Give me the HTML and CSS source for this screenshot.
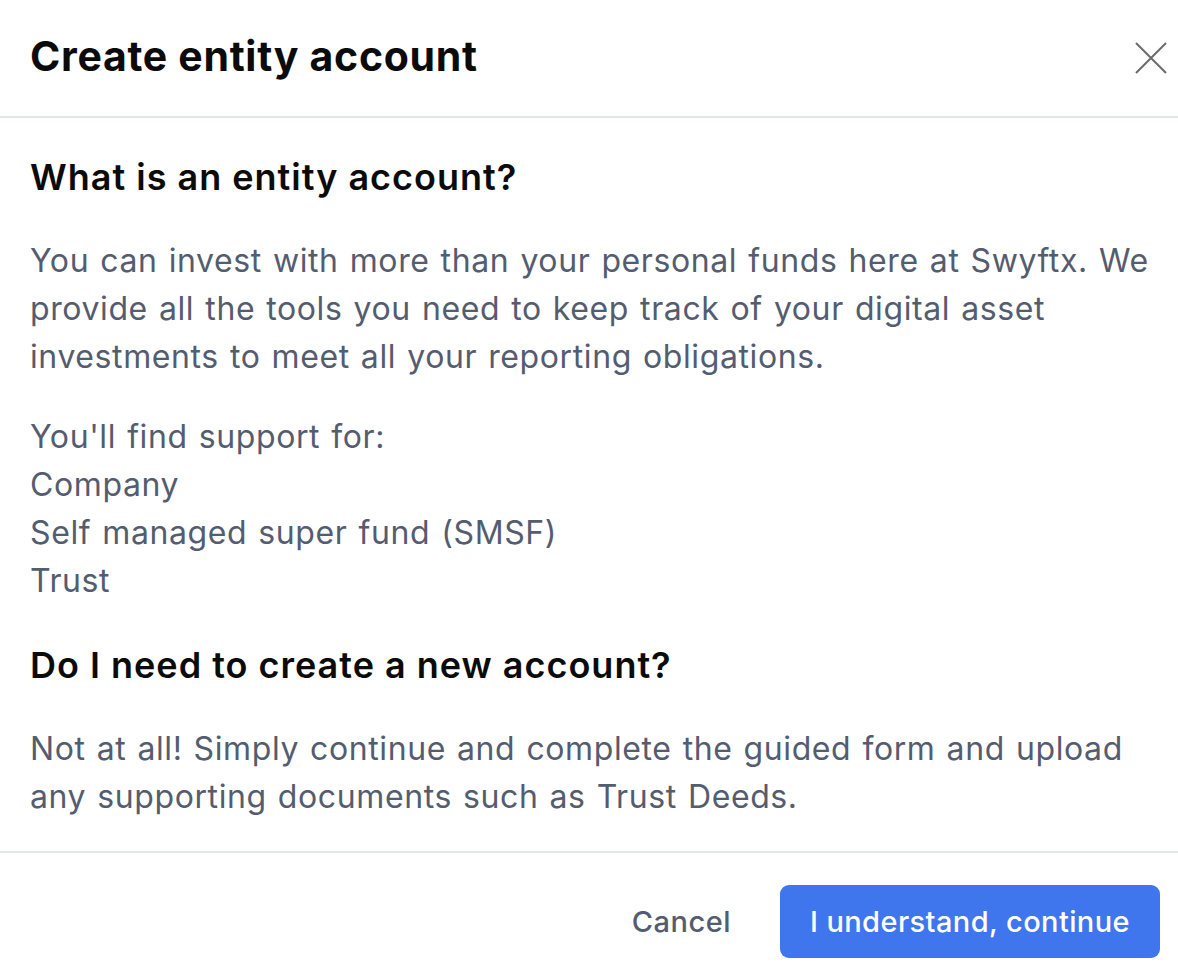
FILE: index.html
```html
<!DOCTYPE html>
<html lang="en">
<head>
<meta charset="utf-8">
<title>Create entity account</title>
<link rel="stylesheet" href="styles.css">
</head>
<body>
<div class="modal">
  <header class="modal-header">
    <h1 class="modal-title">Create entity account</h1>
    <button class="close-btn" aria-label="Close">
      <svg width="34" height="34" viewBox="0 0 34 34"><path d="M2 2 L32 32 M32 2 L2 32" stroke="#6b6b6b" stroke-width="2" fill="none"/></svg>
    </button>
  </header>
  <main class="modal-body">
    <h2 class="section-title">What is an entity account?</h2>
    <p class="text">You can invest with more than your personal funds here at Swyftx. We provide all the tools you need to keep track of your digital asset investments to meet all your reporting obligations.</p>
    <p class="text">You'll find support for:<br>Company<br>Self managed super fund (SMSF)<br>Trust</p>
    <h2 class="section-title second">Do I need to create a new account?</h2>
    <p class="text">Not at all! Simply continue and complete the guided form and upload any supporting documents such as Trust Deeds.</p>
  </main>
  <footer class="modal-footer">
    <button class="btn-cancel">Cancel</button>
    <button class="btn-primary">I understand, continue</button>
  </footer>
</div>
</body>
</html>
```
FILE: styles.css
```css
html, body {
  margin: 0;
  padding: 0;
  background: #ffffff;
}
body {
  font-family: Inter, "Open Sans", sans-serif;
  width: 1178px;
  height: 977px;
  overflow: hidden;
}
.modal {
  display: flex;
  flex-direction: column;
}
.modal-header {
  height: 116px;
  border-bottom: 2px solid #e1e7f1;
  display: flex;
  align-items: center;
  justify-content: space-between;
  padding: 0 10px 0 30px;
}
.modal-title {
  margin: 0;
  font-size: 41px;
  font-weight: 700;
  color: #0b0b0c;
  letter-spacing: 0.7px;
  padding-bottom: 4px;
}
.close-btn {
  background: none;
  border: 0;
  padding: 0;
  width: 34px;
  height: 34px;
  display: flex;
  cursor: pointer;
}
.modal-body {
  padding: 37px 20px 30px 30px;
  border-bottom: 2px solid #e1e7f1;
}
.section-title {
  margin: 0;
  font-size: 36px;
  font-weight: 600;
  color: #0b0b0c;
  line-height: 44px;
  letter-spacing: 1px;
}
.section-title.second {
  margin-top: 38px;
}
.text {
  margin: 38px 0 0 0;
  font-size: 32px;
  line-height: 48px;
  color: #545c6f;
  font-weight: 400;
  letter-spacing: 0.6px;
  word-spacing: 1.5px;
}
.text + .text {
  margin-top: 32px;
}
.modal-footer {
  display: flex;
  justify-content: flex-end;
  align-items: center;
  padding: 32px 18px 20px 30px;
  gap: 49px;
}
.btn-cancel {
  background: none;
  border: 0;
  font-family: inherit;
  font-size: 29px;
  letter-spacing: 0.5px;
  color: #545c6f;
  font-weight: 500;
  padding: 0;
  cursor: pointer;
}
.btn-primary {
  font-family: inherit;
  width: 380px;
  height: 73px;
  background: #3f75ed;
  border: 0;
  border-radius: 9px;
  color: #ffffff;
  font-size: 29px;
  letter-spacing: 0.4px;
  font-weight: 500;
  cursor: pointer;
}
```
